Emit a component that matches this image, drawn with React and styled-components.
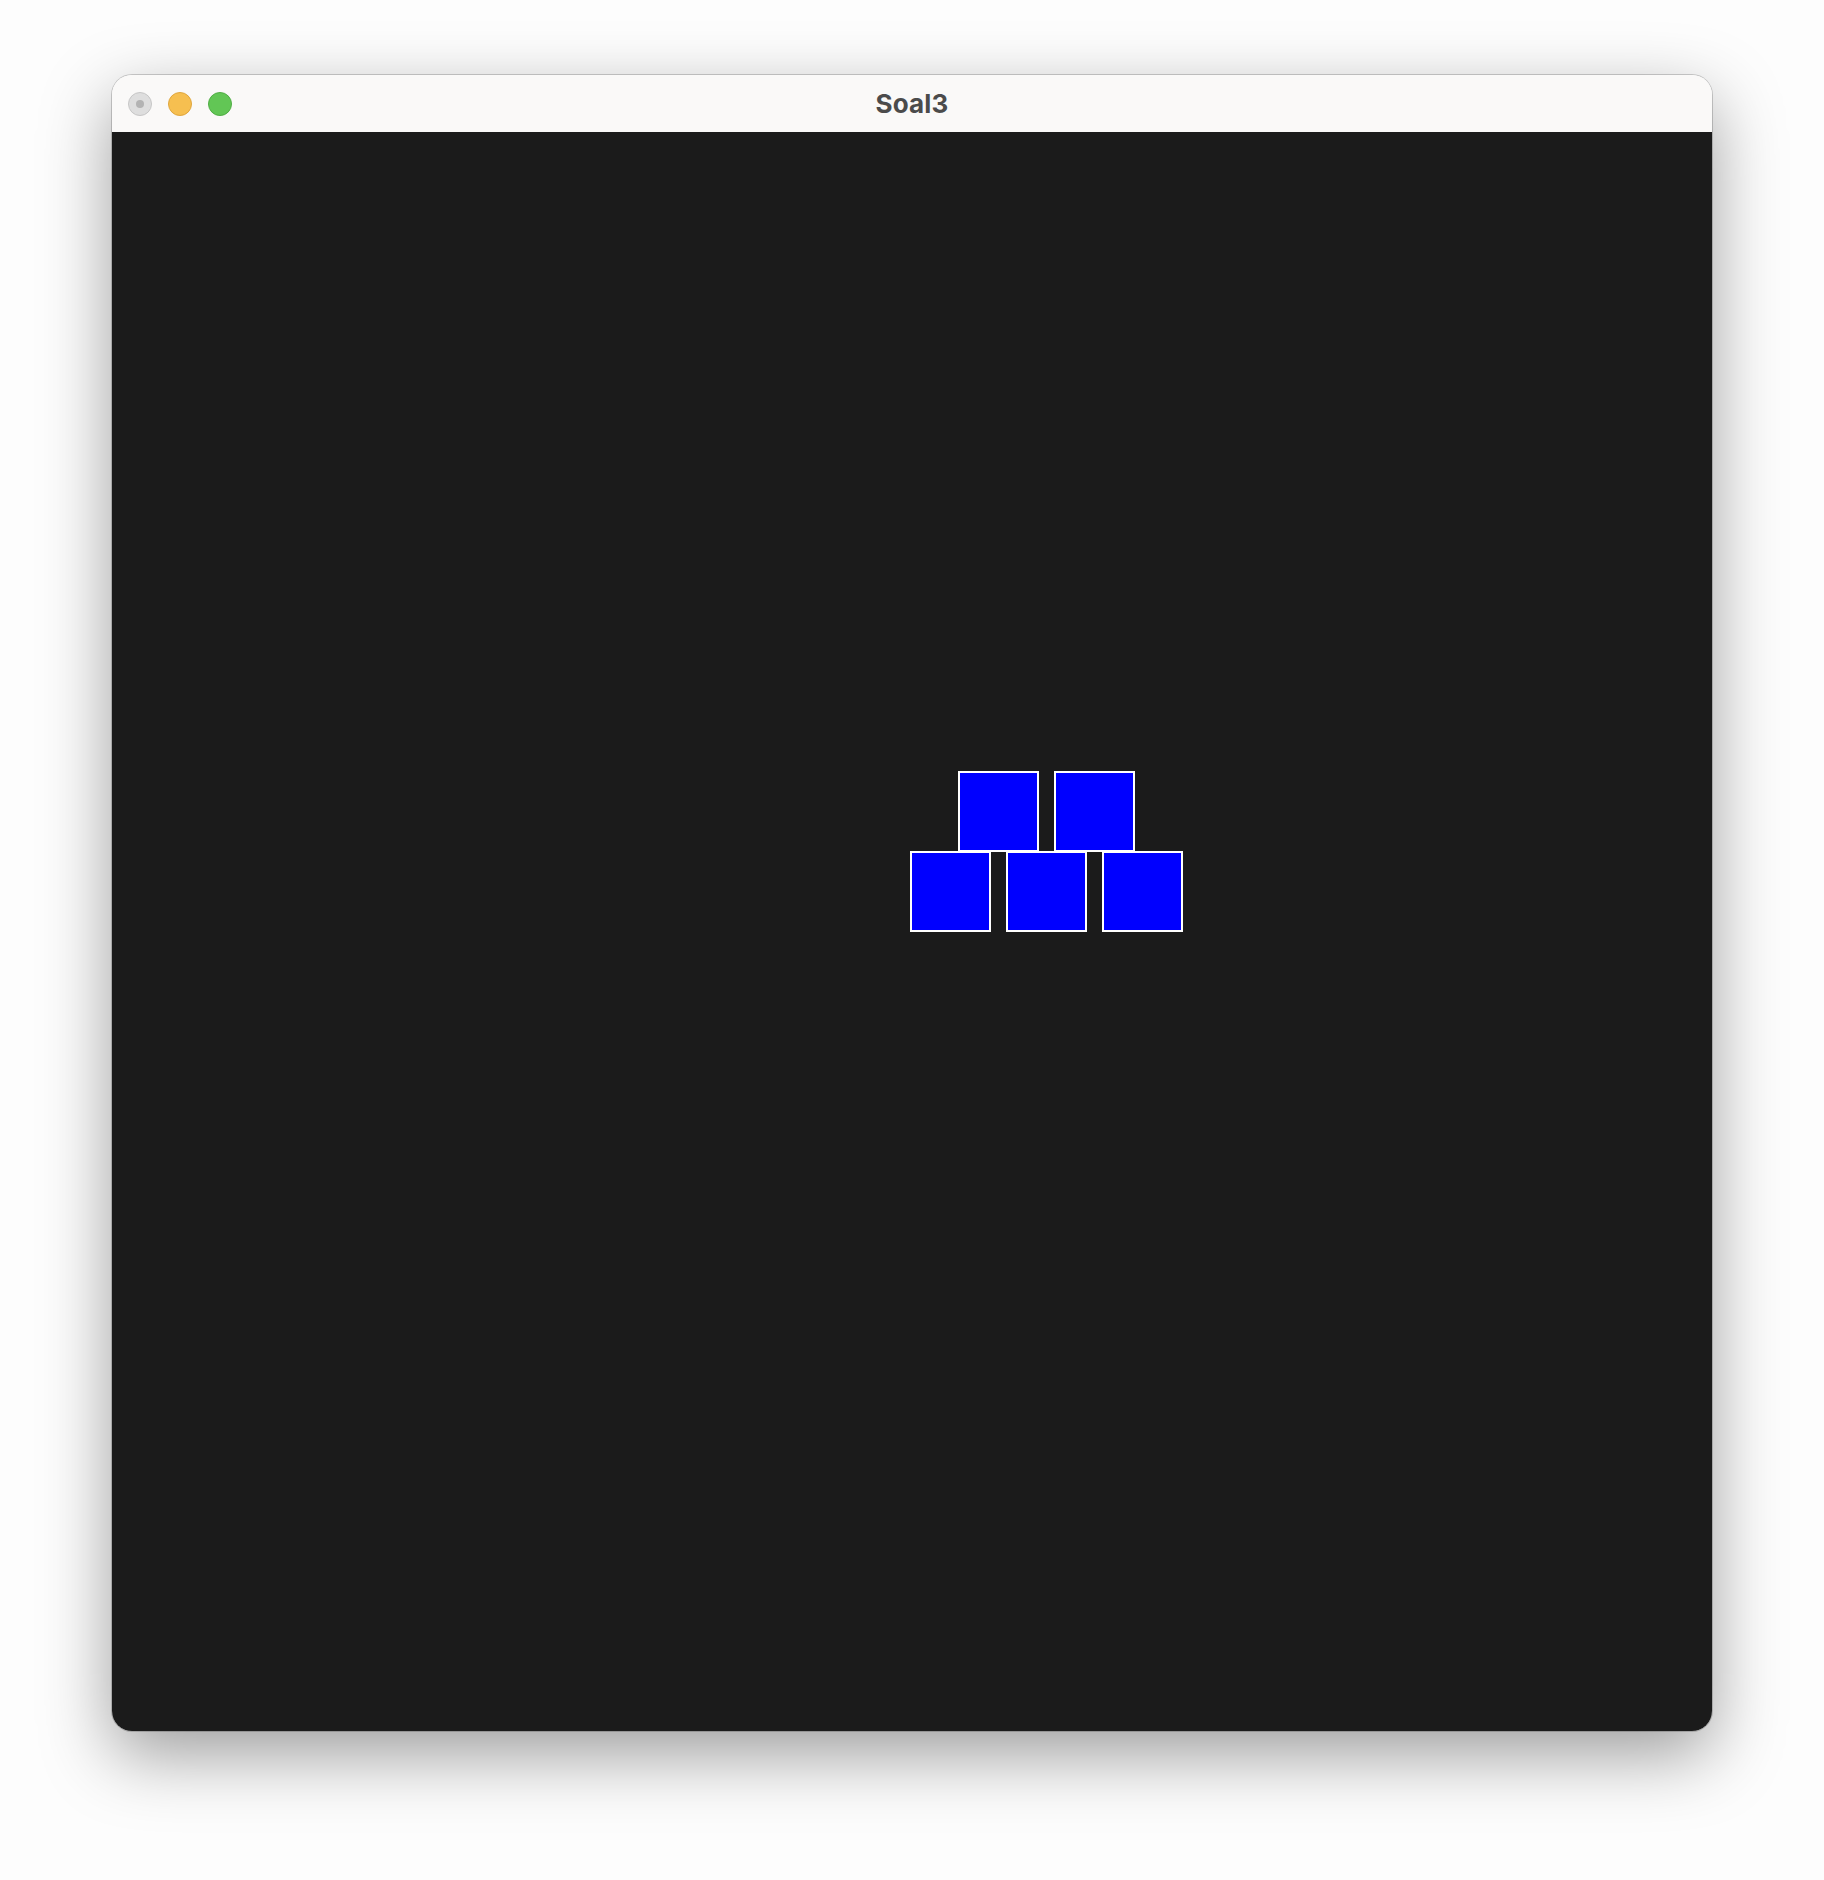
import styled, { createGlobalStyle } from "styled-components";

const GlobalStyle = createGlobalStyle`
    html, body {
        margin: 0;
        padding: 0;
        background: #ffffff;
    }
    body {
        font-family: "Inter", "Liberation Sans", sans-serif;
    }
`;

const Page = styled.div`
    width: 1824px;
    height: 1880px;
    padding: 75px 0 0 112px;
    box-sizing: border-box;
    background: #fdfdfd;
`;

const Window = styled.div`
    width: 1600px;
    height: 1656px;
    border-radius: 20px;
    overflow: hidden;
    display: flex;
    flex-direction: column;
    box-shadow: 0 0 0 1px rgba(0, 0, 0, 0.18), 0 24px 70px rgba(0, 0, 0, 0.38);
`;

const TitleBar = styled.div`
    height: 57px;
    flex: none;
    background: #faf9f8;
    position: relative;
    display: flex;
    align-items: center;
    justify-content: center;
`;

const Lights = styled.div`
    position: absolute;
    left: 16px;
    top: 17px;
    display: flex;
    gap: 16px;
`;

const Light = styled.span`
    width: 24px;
    height: 24px;
    border-radius: 50%;
    box-sizing: border-box;
    background: ${(p) => p.$fill};
    border: 1px solid ${(p) => p.$edge};
    display: flex;
    align-items: center;
    justify-content: center;

    &::after {
        content: "";
        width: 8px;
        height: 8px;
        border-radius: 50%;
        background: ${(p) => (p.$dot ? "#b3b3b3" : "transparent")};
    }
`;

const Title = styled.h1`
    margin: 0;
    font-size: 26px;
    font-weight: 700;
    color: #4b4b4b;
    letter-spacing: 0.2px;
`;

const Canvas = styled.div`
    flex: 1;
    background: #1b1b1b;
    padding: 639px 0 0 798px;
    box-sizing: border-box;
`;

const Stack = styled.div`
    display: inline-flex;
    flex-direction: column;
    align-items: center;
`;

const Row = styled.div`
    display: flex;
    gap: 15px;
    margin-bottom: ${(p) => (p.$overlap ? "-1px" : "0")};
`;

const Block = styled.div`
    width: 81px;
    height: 81px;
    box-sizing: border-box;
    background: #0000ff;
    border: 2px solid #ffffff;
`;

function App() {
    return (
        <Page>
            <GlobalStyle />
            <Window>
                <TitleBar>
                    <Lights>
                        <Light $fill="#dedede" $edge="#c6c6c6" $dot />
                        <Light $fill="#f6bf50" $edge="#dfa63e" />
                        <Light $fill="#62c655" $edge="#50ad45" />
                    </Lights>
                    <Title>Soal3</Title>
                </TitleBar>
                <Canvas>
                    <Stack>
                        <Row $overlap>
                            <Block />
                            <Block />
                        </Row>
                        <Row>
                            <Block />
                            <Block />
                            <Block />
                        </Row>
                    </Stack>
                </Canvas>
            </Window>
        </Page>
    );
}

export default App;
